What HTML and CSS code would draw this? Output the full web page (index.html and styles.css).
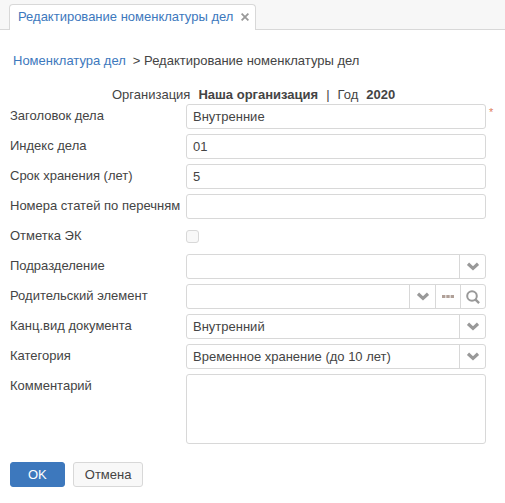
FILE: index.html
```html
<!DOCTYPE html>
<html lang="ru">
<head>
<meta charset="utf-8">
<meta name="viewport" content="width=device-width, initial-scale=1">
<title>Редактирование номенклатуры дел</title>
<link rel="stylesheet" href="styles.css">
</head>
<body>
<svg class="sprite" aria-hidden="true">
  <symbol id="chevron" viewBox="0 0 14 9"><path d="M2 1.8 7 6.4 12 1.8" fill="none" stroke="currentColor" stroke-width="3.2"/></symbol>
</svg>
<header class="tabs">
  <div class="tab">
    <a href="#" class="tab-title">Редактирование номенклатуры дел</a>
    <button type="button" class="tab-close" aria-label="Закрыть">
      <svg width="8" height="8" viewBox="0 0 8 8"><path d="M.6.6 7.4 7.4M7.4.6.6 7.4" stroke="currentColor" stroke-width="1.8"/></svg>
    </button>
  </div>
</header>
<main class="page">
  <nav class="crumbs"><a href="#">Номенклатура дел</a><span class="crumb-current">&gt; Редактирование номенклатуры дел</span></nav>
  <div class="summary">
    <span>Организация</span><b>Наша организация</b><span>|</span><span>Год</span><b>2020</b>
  </div>
  <form class="form">
    <label for="title">Заголовок дела</label>
    <div class="field required"><input class="box" id="title" type="text" value="Внутренние"><span class="star">*</span></div>

    <label for="index">Индекс дела</label>
    <div class="field"><input class="box" id="index" type="text" value="01"></div>

    <label for="term">Срок хранения (лет)</label>
    <div class="field"><input class="box" id="term" type="text" value="5"></div>

    <label for="articles">Номера статей по перечням</label>
    <div class="field"><input class="box" id="articles" type="text"></div>

    <label for="mark">Отметка ЭК</label>
    <div class="field check-field"><input class="check" id="mark" type="checkbox"></div>

    <label for="unit">Подразделение</label>
    <div class="field box combo">
      <select id="unit"><option></option></select>
      <span class="arrow"><svg width="14" height="9"><use href="#chevron"/></svg></span>
    </div>

    <label for="parent">Родительский элемент</label>
    <div class="field box combo">
      <select id="parent"><option></option></select>
      <span class="arrow"><svg width="14" height="9"><use href="#chevron"/></svg></span>
      <button type="button" class="tool" aria-label="Выбрать">
        <svg class="dots" width="12" height="3" viewBox="0 0 12 3"><path d="M0 0h3.4v3H0zM4.3 0h3.4v3H4.3zM8.6 0H12v3H8.6z" fill="currentColor"/></svg>
      </button>
      <button type="button" class="tool" aria-label="Найти">
        <svg width="14" height="14" viewBox="0 0 14 14" fill="none" stroke="currentColor"><circle cx="6" cy="6" r="4.8" stroke-width="2"/><path d="m9.3 9.3 3.8 3.8" stroke-width="2.4"/></svg>
      </button>
    </div>

    <label for="kind">Канц.вид документа</label>
    <div class="field box combo">
      <select id="kind"><option>Внутренний</option></select>
      <span class="arrow"><svg width="14" height="9"><use href="#chevron"/></svg></span>
    </div>

    <label for="category">Категория</label>
    <div class="field box combo">
      <select id="category"><option>Временное хранение (до 10 лет)</option></select>
      <span class="arrow"><svg width="14" height="9"><use href="#chevron"/></svg></span>
    </div>

    <label for="comment">Комментарий</label>
    <div class="field"><textarea class="box area" id="comment"></textarea></div>

    <div class="actions">
      <button type="submit" class="btn primary">OK</button>
      <button type="button" class="btn">Отмена</button>
    </div>
  </form>
</main>
</body>
</html>
```
FILE: styles.css
```css
* {
  box-sizing: border-box;
}

body {
  margin: 0;
  background: #fff;
  color: #444;
  font: 13px/24px "Liberation Sans", Arial, sans-serif;
}

a {
  color: #3d78bd;
  text-decoration: none;
}

button,
input,
select,
textarea {
  margin: 0;
  color: inherit;
  font: inherit;
}

.sprite {
  display: none;
}

.tabs {
  display: flex;
  padding: 4px 9px 0;
  background: #f7f7f7;
  box-shadow: inset 0 -1px #d8d8d8;
}

.tab {
  display: flex;
  align-items: center;
  gap: 8px;
  height: 26px;
  padding: 0 6px 2px 8px;
  border: 1px solid #d8d8d8;
  border-bottom: 0;
  border-radius: 4px 4px 0 0;
  background: #fff;
}

.tab-close {
  display: flex;
  padding: 0;
  border: 0;
  background: none;
  color: #999;
}

.page {
  padding: 19px 19px 16px 10px;
}

.crumbs {
  display: flex;
  gap: 7px;
  padding-left: 3px;
}

.summary {
  display: flex;
  gap: 8px;
  margin-top: 10px;
  padding-left: 102px;
}

.form {
  display: grid;
  grid-template-columns: 171px minmax(0, 1fr);
  column-gap: 5px;
  row-gap: 5px;
  margin-top: -3px;
}

.form label {
  height: 25px;
  white-space: nowrap;
}

.field {
  min-width: 0;
}

.box {
  display: block;
  width: 100%;
  height: 25px;
  padding: 0 6px;
  border: 1px solid #d8d8d8;
  border-radius: 3px;
  background: #fff;
  outline: 0;
}

.required {
  position: relative;
}

.star {
  position: absolute;
  top: 0;
  left: 100%;
  margin-left: 3px;
  color: #e08060;
  font-size: 11px;
  line-height: 16px;
}

.check-field {
  padding-top: 6px;
}

.check {
  display: block;
  width: 13px;
  height: 13px;
  border: 1px solid #d8d8d8;
  border-radius: 3px;
  background: #f8f8f8;
  appearance: none;
}

.check:checked {
  background: #3d78bd;
}

.combo {
  display: grid;
  grid-template-columns: minmax(0, 1fr) 26px;
  grid-auto-columns: 25px;
  grid-auto-flow: column;
  padding: 0;
}

.combo select {
  grid-area: 1 / 1 / 2 / 3;
  height: 23px;
  padding: 0 32px 0 6px;
  border: 0;
  background: none;
  outline: 0;
  appearance: none;
}

.arrow,
.tool {
  display: flex;
  align-items: center;
  justify-content: center;
  padding: 0;
  border: 0;
  border-left: 1px solid #d8d8d8;
  background: none;
  color: #999;
}

.arrow {
  grid-area: 1 / 2;
  pointer-events: none;
}

.dots {
  color: #b0a098;
}

.area {
  height: 70px;
  resize: none;
}

.actions {
  display: flex;
  grid-column: 1 / -1;
  gap: 8px;
  margin-top: 13px;
}

.btn {
  height: 25px;
  padding: 0 11px;
  border: 1px solid #d8d8d8;
  border-radius: 3px;
  background: #f8f8f8;
  line-height: 23px;
}

.primary {
  padding: 0 17px;
  border-color: #3d78bd;
  background: #3d78bd;
  color: #fff;
}
```
